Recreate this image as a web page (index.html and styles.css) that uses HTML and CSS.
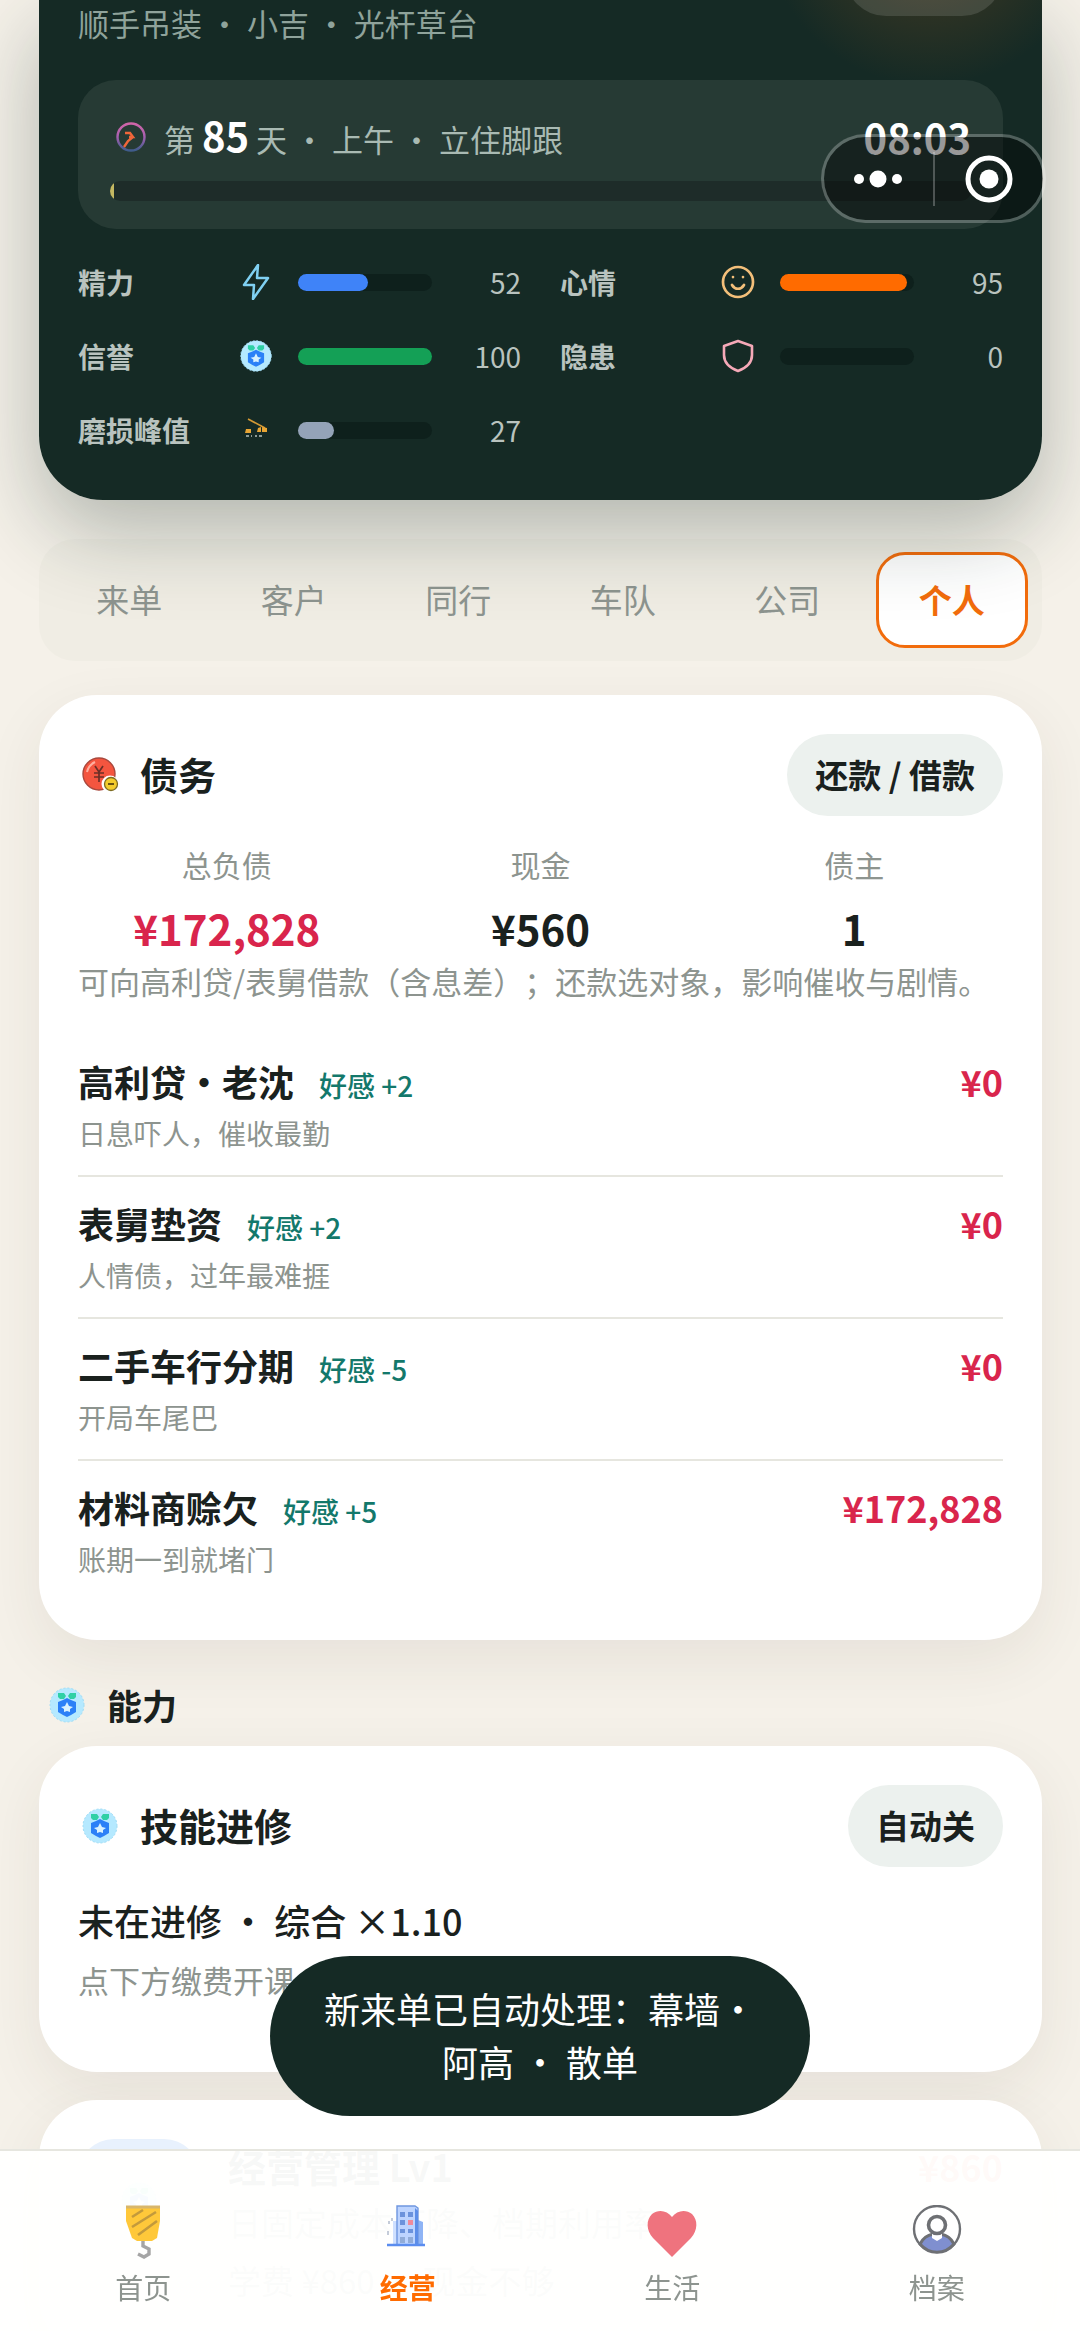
FILE: index.html
```html
<!DOCTYPE html>
<html lang="zh-CN">
<head>
    <meta charset="UTF-8">
    <meta name="viewport" content="width=device-width, initial-scale=1.0">
    <title>经营</title>
    <link rel="stylesheet" href="styles.css">
</head>
<body>
    <!-- shared icons -->
    <svg class="sprite" aria-hidden="true">
        <symbol id="medal" viewBox="0 0 36 36">
            <circle cx="18" cy="18" r="17" fill="#b5e9ff"/>
            <circle cx="18" cy="18" r="17" fill="none" stroke="#9fdcf5" stroke-dasharray="2 2"/>
            <path d="M9 6h6l2 3-2 3h-4l-2-2zM27 6h-6l-2 3 2 3h4l2-2z" fill="#2fd0a5"/>
            <path d="M18 11l4 2 5 2v10l-5 3-4 2-4-2-5-3V15l5-2z" fill="#2b80f7"/>
            <path d="M18 15l2 4 4 1-3 2v3l-3-1-3 1v-3l-3-2 4-1z" fill="#d8f1ff"/>
        </symbol>
    </svg>

    <main class="page">
        <section class="hero">
            <div class="hero-pill"></div>
            <p class="hero-sub">顺手吊装 · 小吉 · 光杆草台</p>

            <div class="day">
                <div class="day-row">
                    <svg class="day-icon" viewBox="0 0 30 30">
                        <defs>
                            <linearGradient id="ring" x1="0" y1="0" x2="0" y2="1">
                                <stop offset="0" stop-color="#d065a8"/>
                                <stop offset=".5" stop-color="#a45fb0"/>
                                <stop offset="1" stop-color="#3f5c8c"/>
                            </linearGradient>
                        </defs>
                        <circle cx="15" cy="15" r="13.5" fill="none" stroke="url(#ring)" stroke-width="2.4"/>
                        <path d="M9 11h5l3 4h-4M17 15l-5 4-4 6" fill="none" stroke="#f0663a" stroke-width="2.4"/>
                    </svg>
                    <span class="day-text">第 <b>85</b> 天 · 上午 · 立住脚跟</span>
                    <b class="day-time">08:03</b>
                </div>
                <div class="day-bar"><i></i></div>
            </div>

            <div class="stats">
                <div class="stat">
                    <span class="stat-name">精力</span>
                    <svg class="stat-icon" viewBox="0 0 36 36" fill="none" stroke="#7fd0f2" stroke-width="2.5" stroke-linejoin="round"><path d="M20 1L6 21h10l-1 14 15-21H19z"/></svg>
                    <div class="bar"><i style="width:52%;background:#3f83f8"></i></div>
                    <span class="stat-value">52</span>
                </div>
                <div class="stat">
                    <span class="stat-name">心情</span>
                    <svg class="stat-icon" viewBox="0 0 36 36" fill="none" stroke="#f3bf7a" stroke-width="2.7" stroke-linecap="round"><circle cx="18" cy="18" r="15"/><path d="M12 21c3 5 9 5 12 0M13 13v.1M23 13v.1"/></svg>
                    <div class="bar"><i style="width:95%;background:#ff6b00"></i></div>
                    <span class="stat-value">95</span>
                </div>
                <div class="stat">
                    <span class="stat-name">信誉</span>
                    <svg class="stat-icon" viewBox="-2 -2 40 40"><use href="#medal" width="36" height="36"/></svg>
                    <div class="bar"><i style="width:100%;background:#14a056"></i></div>
                    <span class="stat-value">100</span>
                </div>
                <div class="stat">
                    <span class="stat-name">隐患</span>
                    <svg class="stat-icon" viewBox="0 0 36 36" fill="none" stroke="#f5a9b8" stroke-width="2.6" stroke-linejoin="round"><path d="M18 3l14 5v9c0 8-6 13-14 16C10 30 4 25 4 17V8z"/></svg>
                    <div class="bar"><i style="width:0%"></i></div>
                    <span class="stat-value">0</span>
                </div>
                <div class="stat">
                    <span class="stat-name">磨损峰值</span>
                    <svg class="stat-icon" viewBox="0 0 36 36">
                        <path d="M10 7l17 9" stroke="#d59a35" stroke-width="1.6"/>
                        <path d="M8 17h5v4H7zM20 16l3-1v5h-4zM24 15l5 1v4h-5z" fill="#e8a534"/>
                        <path d="M8 24h3M13 24h1M17 24h2M21 24h3" stroke="#8d9a96" stroke-width="2"/>
                    </svg>
                    <div class="bar"><i style="width:27%;background:#94a3b8"></i></div>
                    <span class="stat-value">27</span>
                </div>
            </div>
        </section>

        <nav class="tabs">
            <button>来单</button>
            <button>客户</button>
            <button>同行</button>
            <button>车队</button>
            <button>公司</button>
            <button class="active">个人</button>
        </nav>

        <section class="card debt">
            <div class="card-head">
                <svg class="icon" viewBox="-4 -4 44 44">
                    <circle cx="17" cy="17" r="16" fill="#f4553f" stroke="#a9483d" stroke-width="1.4"/>
                    <path d="M5 15c1-5 4-8 8-10" fill="none" stroke="#ffb0a0" stroke-width="2"/>
                    <path d="M13 9l4 6 4-6M17 15v10M12 16h10M12 20h10" fill="none" stroke="#6b2f27" stroke-width="1.7"/>
                    <circle cx="28" cy="27" r="8.5" fill="#fff"/>
                    <circle cx="29" cy="27" r="6.5" fill="#f3cc2c" stroke="#7c6a21" stroke-width="1.3"/>
                    <path d="M26 27h6" stroke="#6b5412" stroke-width="2"/>
                </svg>
                <h2>债务</h2>
                <button class="pill">还款 / 借款</button>
            </div>

            <div class="sums">
                <div><span>总负债</span><b class="red">¥172,828</b></div>
                <div><span>现金</span><b>¥560</b></div>
                <div><span>债主</span><b>1</b></div>
            </div>
            <p class="note">可向高利贷/表舅借款（含息差）；还款选对象，影响催收与剧情。</p>

            <ul class="lenders">
                <li>
                    <div class="line"><strong>高利贷·老沈</strong><em>好感 +2</em><b>¥0</b></div>
                    <p>日息吓人，催收最勤</p>
                </li>
                <li>
                    <div class="line"><strong>表舅垫资</strong><em>好感 +2</em><b>¥0</b></div>
                    <p>人情债，过年最难捱</p>
                </li>
                <li>
                    <div class="line"><strong>二手车行分期</strong><em>好感 -5</em><b>¥0</b></div>
                    <p>开局车尾巴</p>
                </li>
                <li>
                    <div class="line"><strong>材料商赊欠</strong><em>好感 +5</em><b>¥172,828</b></div>
                    <p>账期一到就堵门</p>
                </li>
            </ul>
        </section>

        <h3 class="section-title">
            <svg class="icon" viewBox="-4 -4 44 44"><use href="#medal" width="36" height="36"/></svg>
            能力
        </h3>

        <section class="card skill">
            <div class="card-head">
                <svg class="icon" viewBox="-4 -4 44 44"><use href="#medal" width="36" height="36"/></svg>
                <h2>技能进修</h2>
                <button class="pill">自动关</button>
            </div>
            <p class="skill-state">未在进修 · 综合 ×1.10</p>
            <p class="note">点下方缴费开课</p>
        </section>

        <section class="card course">
            <div class="course-tile"><svg class="icon" viewBox="-4 -4 44 44"><use href="#medal" width="36" height="36"/></svg></div>
            <div class="course-body">
                <div class="course-name"><h2>经营管理 Lv1</h2><b>¥860</b></div>
                <p>日固定成本下降、档期利用率</p>
                <p>学费 ¥860 · 现金不够</p>
            </div>
        </section>
    </main>

    <!-- mini program capsule -->
    <div class="capsule">
        <button aria-label="更多"><svg width="48" height="20" viewBox="0 0 48 20" fill="#fff"><circle cx="5" cy="10" r="5"/><circle cx="24" cy="10" r="8.5"/><circle cx="43" cy="10" r="5"/></svg></button>
        <button aria-label="关闭"><svg width="48" height="48" viewBox="0 0 48 48"><circle cx="24" cy="24" r="21" fill="none" stroke="#fff" stroke-width="5"/><circle cx="24" cy="24" r="9.5" fill="#fff"/></svg></button>
    </div>

    <div class="toast">新来单已自动处理：幕墙·<br>阿高 · 散单</div>

    <nav class="tabbar">
        <a href="#">
            <svg viewBox="0 0 54 54">
                <path d="M10 2h34v14l-3 17-5 3H21l-5-3-6-17z" fill="#ffc83a"/>
                <path d="M10 2h34" stroke="#d8b66a" stroke-width="3"/>
                <path d="M16 12l11-7M16 22l24-15M22 30l19-14" stroke="#c39a3c" stroke-width="2.6"/>
                <path d="M27 36v5l6 3v5l-5 3-6-3" fill="none" stroke="#a5a5a5" stroke-width="3.4"/>
            </svg>
            首页
        </a>
        <a href="#" class="active">
            <svg viewBox="0 0 54 54">
                <path d="M12 16h5v24h-5z" fill="#cfe0ff"/>
                <path d="M37 15l5 2v24h-6z" fill="#8fb4f5"/>
                <path d="M16 1h18l3 2v37H16z" fill="#bdd4ff" stroke="#6f97e0" stroke-width="1.4"/>
                <path d="M34 3l3 3v34h-3z" fill="#5d8ee8"/>
                <path d="M19 7h5v5h-5zM27 7h5v5h-5zM19 15h5v5h-5zM19 24h5v4h-5zM27 24h5v4h-5z" fill="#6c93dc"/>
                <path d="M27 15h5v5h-5z" fill="#f08a9a"/>
                <path d="M19 32h5v6h-5zM27 32h5v6h-5z" fill="#91acd8"/>
                <path d="M6 40h38" stroke="#5b8def" stroke-width="2.6"/>
                <path d="M8 16v3M7 26v4M11 13v3" stroke="#8a99b5"/>
            </svg>
            经营
        </a>
        <a href="#">
            <svg viewBox="0 0 54 54"><path d="M27 52L8 33C1 25 1 15 7 9c6-5 15-4 20 3 5-7 14-8 20-3 6 6 6 16-1 24z" fill="#ef737e"/></svg>
            生活
        </a>
        <a href="#">
            <svg viewBox="0 0 54 54">
                <circle cx="27" cy="24" r="23" fill="#fff" stroke="#6e7074" stroke-width="2.4"/>
                <path d="M10 39c3-6 8-9 13-10h8c5 1 10 4 13 10-9 11-25 11-34 0z" fill="#7f8fcf" stroke="#6e7074" stroke-width="3"/>
                <path d="M22 27h10v6l-5 3-5-3z" fill="#fff"/>
                <circle cx="27" cy="20" r="8.5" fill="#fff" stroke="#6e7074" stroke-width="3.6"/>
            </svg>
            档案
        </a>
    </nav>
</body>
</html>
```
FILE: styles.css
```css
:root {
    --bg: #f5f1e9;
    --dark: #152a25;
    --ink: #1a211e;
    --muted: #8d948f;
    --orange: #f26c0c;
    --red: #d9254c;
    --green: #13786b;
    --line: #e6e6df;
}

* {
    box-sizing: border-box;
    margin: 0;
    padding: 0;
}

body {
    font-family: "Noto Sans CJK SC", sans-serif;
    text-spacing-trim: space-all;
    background: var(--bg);
    color: var(--ink);
}

button {
    font: inherit;
    color: inherit;
    background: none;
    border: none;
    cursor: pointer;
}

.sprite {
    display: none;
}

.page {
    height: 100vh;
    overflow: hidden;
    padding: 0 38px 0 39px;
}

/* hero */
.hero {
    position: relative;
    overflow: hidden;
    z-index: 1;
    padding: 0 39px 47px;
    border-radius: 0 0 64px 64px;
    background: radial-gradient(circle at 890px -80px, #4a3c22 0, #152a25 165px);
    box-shadow: 0 32px 84px rgba(20, 42, 37, 0.3);
}

.hero-pill {
    position: absolute;
    right: 39px;
    top: -66px;
    width: 158px;
    height: 82px;
    border-radius: 41px;
    background: rgba(255, 255, 255, 0.12);
}

.hero-sub {
    padding-bottom: 34px;
    font-size: 31px;
    line-height: 46px;
    color: #8fa39b;
}

.day {
    padding: 33px 32px 28px;
    border-radius: 38px;
    background: #263a34;
}

.day-row {
    display: flex;
    align-items: center;
    height: 48px;
    margin-bottom: 20px;
    color: #fff;
}

.day-icon {
    width: 30px;
    height: 30px;
    margin: 0 18px 0 6px;
}

.day-text {
    flex: 1;
    font-size: 31px;
    line-height: 48px;
    color: #a9bab3;
}

.day-text b,
.day-time {
    font-size: 40px;
    line-height: 48px;
    color: #fff;
}

.day-bar {
    height: 20px;
    border-radius: 10px;
    overflow: hidden;
    background: #1e2c29;
}

.day-bar i {
    display: block;
    width: 4px;
    height: 100%;
    background: #c4b862;
}

.stats {
    display: grid;
    grid-template-columns: 1fr 1fr;
    gap: 28px 39px;
    margin-top: 30px;
}

.stat {
    display: flex;
    align-items: center;
    height: 46px;
    font-size: 28px;
    line-height: 46px;
    color: #b9c3bf;
}

.stat-name {
    width: 160px;
    font-weight: 700;
}

.stat-icon {
    width: 36px;
    height: 36px;
    margin-right: 24px;
}

.bar {
    flex: 1;
    height: 17px;
    border-radius: 9px;
    background: #0e201c;
}

.bar i {
    display: block;
    height: 100%;
    border-radius: 9px;
}

.stat-value {
    width: 89px;
    text-align: right;
}

/* tabs */
.tabs {
    display: flex;
    gap: 12px;
    margin: 39px 0 34px;
    padding: 13px 14px;
    border-radius: 36px;
    background: #f0ede4;
}

.tabs button {
    flex: 1;
    height: 96px;
    padding-bottom: 2px;
    border: 3px solid transparent;
    border-radius: 29px;
    font-size: 33px;
    color: var(--muted);
}

.tabs .active {
    border-color: var(--orange);
    background: #fff;
    color: var(--orange);
    font-weight: 700;
}

/* cards */
.card {
    padding: 39px;
    border-radius: 58px;
    background: #fff;
    box-shadow: 0 20px 60px rgba(60, 50, 40, 0.08);
}

.card-head {
    display: flex;
    align-items: center;
    gap: 18px;
    height: 82px;
}

.icon {
    width: 44px;
    height: 44px;
    flex: none;
}

h2 {
    flex: 1;
    padding-bottom: 2px;
    font-size: 38px;
    line-height: 54px;
    font-weight: 700;
}

.pill {
    height: 82px;
    padding: 0 28px 2px;
    border-radius: 41px;
    background: #ecf1ee;
    font-size: 33px;
    font-weight: 700;
}

.sums {
    display: grid;
    grid-template-columns: repeat(3, 1fr);
    gap: 16px;
    margin-top: 25px;
    text-align: center;
}

.sums span {
    display: block;
    margin-bottom: 11px;
    font-size: 30px;
    line-height: 46px;
    color: var(--muted);
}

.sums b {
    display: block;
    font-size: 42px;
    line-height: 60px;
}

.sums .red {
    color: var(--red);
}

.note {
    font-size: 31px;
    line-height: 46px;
    color: var(--muted);
}

.lenders {
    margin-top: 31px;
    list-style: none;
}

.lenders li {
    padding: 18px 0 22px;
    border-bottom: 2px solid var(--line);
}

.lenders li:last-child {
    border-bottom: none;
}

.line {
    display: flex;
    align-items: baseline;
    margin-bottom: 4px;
    font-size: 36px;
    line-height: 56px;
}

.line strong {
    font-weight: 700;
}

.line em {
    flex: 1;
    margin-left: 25px;
    font-size: 28px;
    line-height: 40px;
    font-style: normal;
    font-weight: 500;
    color: var(--green);
}

.line b {
    color: var(--red);
}

.lenders p {
    font-size: 28px;
    line-height: 40px;
    color: var(--muted);
}

.section-title {
    display: flex;
    align-items: center;
    gap: 18px;
    margin: 38px 0 14px;
    padding-left: 6px;
    font-size: 35px;
    line-height: 54px;
    font-weight: 700;
}

.skill {
    margin-bottom: 28px;
}

.skill-state {
    margin: 26px 0 10px;
    font-size: 36px;
    line-height: 54px;
    font-weight: 500;
}

.skill .note {
    margin-bottom: 30px;
}

.course {
    display: flex;
    gap: 28px;
}

.course-tile {
    display: flex;
    align-items: center;
    justify-content: center;
    width: 122px;
    height: 122px;
    border-radius: 36px;
    background: #e8f1fd;
}

.course-body {
    flex: 1;
}

.course-name {
    display: flex;
    font-size: 36px;
    line-height: 54px;
}

.course-name b {
    color: #f2603c;
}

.course p {
    margin: 4px 0 12px;
    font-size: 33px;
    line-height: 46px;
    color: var(--muted);
}

/* floating layers */
.capsule {
    position: absolute;
    top: 134px;
    right: 34px;
    z-index: 2;
    display: flex;
    align-items: center;
    width: 225px;
    height: 89px;
    border: 3px solid rgba(255, 255, 255, 0.25);
    border-radius: 45px;
    background: rgba(0, 0, 0, 0.4);
    background-clip: padding-box;
}

.capsule button {
    display: flex;
    align-items: center;
    justify-content: center;
    flex: 1;
    height: 54px;
}

.capsule button + button {
    border-left: 2px solid rgba(255, 255, 255, 0.25);
}

.toast {
    position: fixed;
    left: 50%;
    bottom: 215px;
    z-index: 3;
    width: 50%;
    transform: translateX(-50%);
    padding: 26px 0 28px;
    border-radius: 80px;
    background: var(--dark);
    color: #fff;
    font-size: 36px;
    line-height: 53px;
    text-align: center;
}

.tabbar {
    position: fixed;
    left: 0;
    right: 0;
    bottom: 0;
    z-index: 2;
    display: flex;
    height: 182px;
    padding: 54px 11px 0;
    border-top: 2px solid var(--line);
    background: rgba(255, 255, 254, 0.97);
}

.tabbar a {
    display: flex;
    flex: 1;
    flex-direction: column;
    align-items: center;
    gap: 6px;
    font-size: 28px;
    line-height: 44px;
    color: var(--muted);
    text-decoration: none;
}

.tabbar svg {
    width: 54px;
    height: 54px;
}

.tabbar .active {
    color: #ff6b00;
    font-weight: 700;
}
```
